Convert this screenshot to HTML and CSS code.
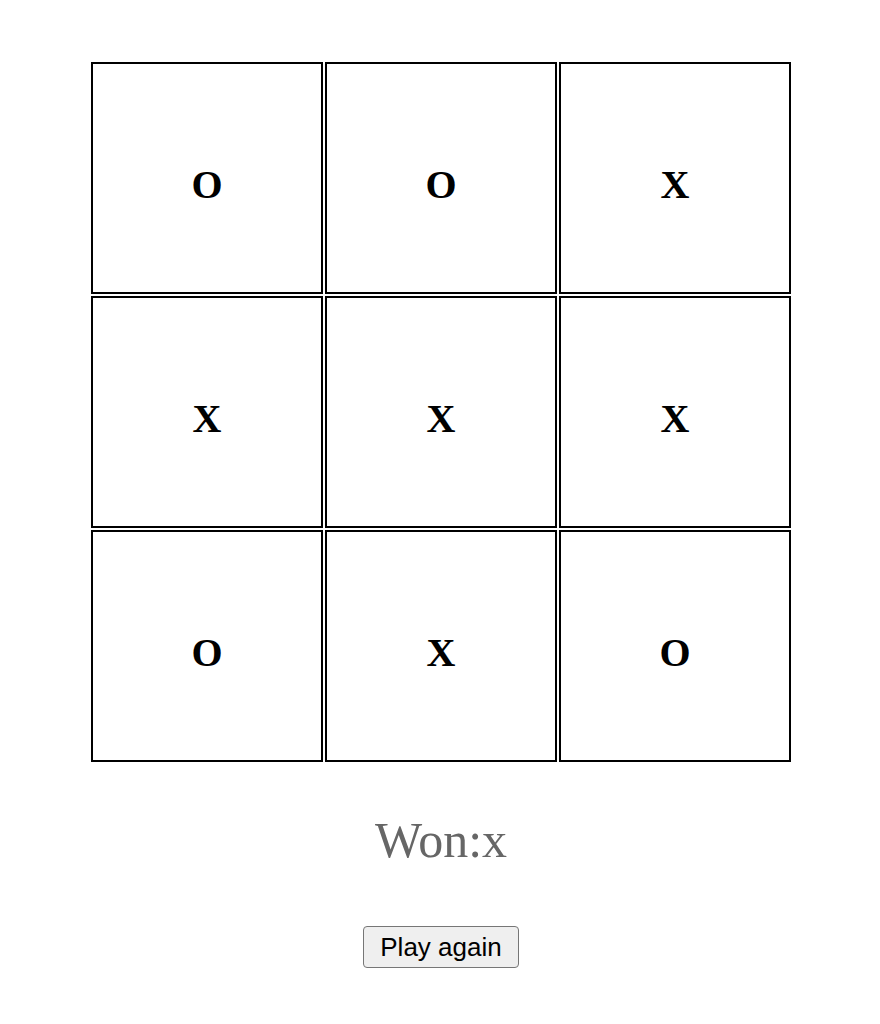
FILE: index.html
```html
<!DOCTYPE html>
<html lang="en">
<head>
    <meta charset="UTF-8">
    <meta name="viewport" content="width=device-width, initial-scale=1.0">
    <title>Tic Tac Toe</title>
    <link rel="stylesheet" href="styles.css">
</head>
<body>
    <div class="game">
        <div class="board">
            <div class="cell">O</div>
            <div class="cell">O</div>
            <div class="cell">X</div>
            <div class="cell">X</div>
            <div class="cell">X</div>
            <div class="cell">X</div>
            <div class="cell">O</div>
            <div class="cell">X</div>
            <div class="cell">O</div>
        </div>

        <div class="status">Won:x</div>

        <button class="again">Play again</button>
    </div>
</body>
</html>
```

FILE: styles.css
```css
body {
    margin: 0;
    font-family: "Liberation Serif", "Times New Roman", serif;
    background: #fff;
}

.game {
    display: flex;
    flex-direction: column;
    align-items: center;
    padding: 62px 0 0 2px;
}

.board {
    display: grid;
    grid-template-columns: repeat(3, 232px);
    grid-template-rows: repeat(3, 232px);
    gap: 2px;
}

.cell {
    box-sizing: border-box;
    border: 2px solid #000;
    display: flex;
    align-items: center;
    justify-content: center;
    padding-top: 12px;
    font-size: 40px;
    font-weight: bold;
    color: #000;
}

.status {
    margin-top: 50px;
    font-size: 50px;
    line-height: 56px;
    color: #666;
}

.again {
    margin-top: 58px;
    font-family: "Liberation Sans", Arial, sans-serif;
    font-size: 26px;
    line-height: 30px;
    padding: 5px 16px;
    color: #000;
    background-color: #efefef;
    border: 1px solid #767676;
    border-radius: 4px;
}
```
